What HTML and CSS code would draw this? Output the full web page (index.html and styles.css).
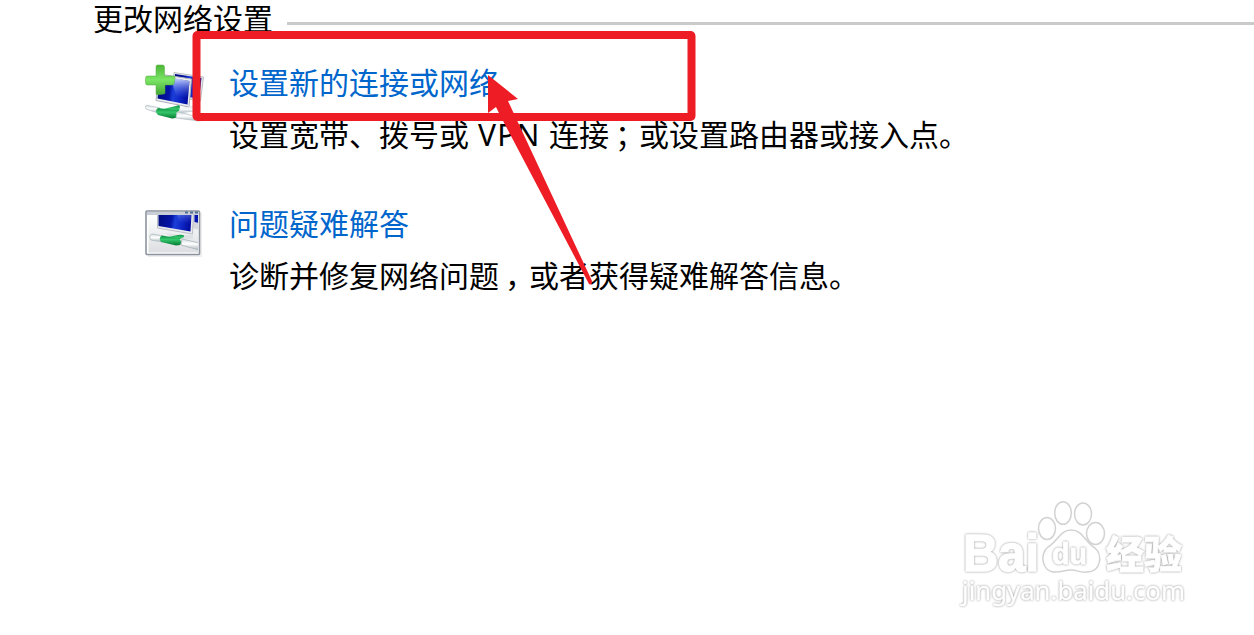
FILE: index.html
```html
<!DOCTYPE html>
<html lang="zh-CN">
<head>
<meta charset="utf-8">
<title>更改网络设置</title>
<link rel="stylesheet" href="styles.css">
</head>
<body>
<main class="page">
  <header class="heading"><h1>更改网络设置</h1><span class="rule"></span></header>
  <section class="option">
    <svg class="icon" width="62" height="62" viewBox="0 0 62 62" aria-hidden="true">
      <defs>
        <linearGradient id="screen" x1="0" y1=".45" x2="1" y2=".55"><stop offset="0" stop-color="#000c82"/><stop offset=".38" stop-color="#0415a8"/><stop offset=".5" stop-color="#1c3fd8"/><stop offset=".7" stop-color="#1028c8"/><stop offset="1" stop-color="#000a9a"/></linearGradient>
        <linearGradient id="shine" x1="0" y1="0" x2="0" y2="1"><stop offset="0" stop-color="#dfe7ff" stop-opacity=".95"/><stop offset="1" stop-color="#4a6ae8" stop-opacity="0"/></linearGradient>
        <linearGradient id="plus" x1="0" y1="0" x2="0" y2="1"><stop offset="0" stop-color="#4db538"/><stop offset=".5" stop-color="#7be566"/><stop offset="1" stop-color="#44a533"/></linearGradient>
        <linearGradient id="green" x1="0" y1="0" x2="0" y2="1"><stop offset="0" stop-color="#0b8e3f"/><stop offset=".4" stop-color="#35c76c"/><stop offset="1" stop-color="#047a32"/></linearGradient>
        <linearGradient id="cable" x1="0" y1="0" x2="0" y2="1"><stop offset="0" stop-color="#d5dde0"/><stop offset=".45" stop-color="#fff"/><stop offset="1" stop-color="#a9b6bc"/></linearGradient>
      </defs>
      <path d="M29 9.500 58.500 14 55.500 38 27 33z" fill="#e4e6e8" stroke="#b0b4b8" stroke-width=".8"/>
      <path d="M30 11 56.500 15 54 36 29 31z" fill="url(#screen)"/>
      <path d="M14 11 46.500 16 44 44 11 37.500z" fill="#ebedef" stroke="#aeb3ba" stroke-width="1"/>
      <path d="M15 13 44.500 18 42.500 41.500 12.500 35.500z" fill="url(#screen)"/>
      <path d="M26 14.500 44.500 18 43 35 31 33z" fill="url(#shine)"/>
      <path d="M30 46 48 43 57 45 54 48 36 50z" fill="url(#cable)"/>
      <path d="M18 46 31 43Q35 41 35 44L34 48 29 51z" fill="url(#green)"/>
      <path d="M3 42.500Q-1 42 1 46L13 50 15 45z" fill="url(#cable)" stroke="#b7c4c9" stroke-width=".8"/>
      <path d="M13 45 31 47.500Q34 51 31 55L27 55.500 13 52Q9 48 13 45z" fill="url(#green)"/>
      <path d="M32 49 42 51 59 57 54 58 31 55z" fill="url(#cable)" stroke="#b9c5ca" stroke-width=".8"/>
      <path d="M12.500 2h5q2 0 2 2v9h9q2 0 1.500 2l-1 5.500q-.5 1.500-2 1.500H20v7.500q0 1.500-1.500 1.500l-6 .8q-1.500 0-1.500-1.500V22H2.500q-2 0-2-2v-5q0-2 2-2H11V4q0-2 1.500-2z" fill="url(#plus)" stroke="#57ae40" stroke-width=".5"/>
    </svg>
    <div class="copy">
      <a class="link" href="#">设置新的连接或网络</a>
      <p class="desc">设置宽带、拨号或<span class="latin"> VPN </span>连接<span class="mark">；</span>或设置路由器或接入点。</p>
    </div>
  </section>
  <section class="option second">
    <svg class="icon" width="62" height="62" viewBox="0 0 62 62" aria-hidden="true">
      <defs>
        <clipPath id="inside"><path d="M3.500 11h49.500v37.500h-49.500z"/></clipPath>
        <linearGradient id="pane" x1="0" y1="0" x2="0" y2="1"><stop offset="0" stop-color="#fff"/><stop offset="1" stop-color="#dcdee1"/></linearGradient>
      </defs>
      <path d="M3 9h54v44H3z" fill="#eeeeef"/>
      <rect x="1" y="7" width="53.500" height="43.500" rx="1" fill="#fff" stroke="#8d949f" stroke-width="1.600"/>
      <path d="M2 8h51.500v3H2z" fill="#c9ced6"/>
      <path d="M40 7.500h3v2h-3zM45 7.500h3v2h-3zM50 7.500h3v2h-3z" fill="#536f92"/>
      <path d="M3.500 11h49.500v37.500h-49.500z" fill="url(#pane)"/>
      <g clip-path="url(#inside)">
        <path d="M48 10h7v16l-8-2z" fill="#d5d9dd"/><path d="M49.500 10h5v9l-5-1z" fill="#0515b2"/>
        <path d="M12.500 10h36l-1 20-35-6z" fill="#e9ebee" stroke="#aeb3ba" stroke-width=".8"/>
        <path d="M13.500 10h33l-1 17.500-32-5.500z" fill="url(#screen)"/>
        <path d="M31 7h15.500l-1 13-11-1z" fill="url(#shine)" opacity=".45"/>
        <path d="M20 29 36 31 48 31v4l-18 0z" fill="#dfe2e4"/>
        <path d="M23 33 33 31Q40 30 39 33L31 37z" fill="url(#green)"/>
        <path d="M7 30 18 32v6L6 36Q3 32 7 30z" fill="url(#cable)" stroke="#aebbc0" stroke-width=".8"/>
        <path d="M17 31.500 34 34.500Q38 38 35 41L31 41.500 16 38Q13 34 17 31.500z" fill="url(#green)"/>
        <path d="M37 35 54 39v7L36 41z" fill="url(#cable)" stroke="#a8b5bb" stroke-width=".8"/>
      </g>
    </svg>
    <div class="copy">
      <a class="link" href="#">问题疑难解答</a>
      <p class="desc">诊断并修复网络问题<span class="mark">，</span>或者获得疑难解答信息。</p>
    </div>
  </section>
  <svg class="callout" width="1254" height="635" viewBox="0 0 1254 635" aria-hidden="true">
    <rect x="196.500" y="35" width="495" height="82" rx="1" fill="none" stroke="#ee1c25" stroke-width="8" stroke-linejoin="round"/>
    <path d="M488 75 518 99 508 101 592 281Q592 286 589 284L501 117 496 107 488 113z" fill="#ee1c25"/>
  </svg>
  <svg class="watermark" width="254" height="145" viewBox="950 490 254 145">
    <text x="963" y="571" class="brand" textLength="76" lengthAdjust="spacingAndGlyphs">Bai</text>
    <g class="paw">
      <ellipse cx="1047" cy="528.500" rx="8.500" ry="11"/><ellipse cx="1063" cy="513" rx="8.300" ry="11.300"/><ellipse cx="1083" cy="514" rx="8.500" ry="11"/><ellipse cx="1095.500" cy="533.500" rx="9" ry="11"/>
      <path d="M1071 530C1060 530 1058 541 1048 547C1039 554 1042 572 1055 572C1063 572 1064 570 1071 570C1078 570 1079 573 1087 572C1101 572 1103 555 1095 548C1084 541 1083 530 1071 530z"/>
    </g>
    <text x="1052" y="564" class="du" textLength="35" lengthAdjust="spacingAndGlyphs">du</text>
    <text x="1106" y="568" class="cn" textLength="76" lengthAdjust="spacingAndGlyphs">经验</text>
    <text x="962" y="600" class="domain" textLength="223" lengthAdjust="spacingAndGlyphs">jingyan.baidu.com</text>
  </svg>
</main>
</body>
</html>
```
FILE: styles.css
```css
* { box-sizing: border-box; }
body { margin: 0; background: #fff; color: #000; font-family: "Noto Sans CJK SC", sans-serif; }
.page { position: relative; width: 1254px; height: 635px; overflow: hidden; }
.heading { display: flex; height: 40px; padding-left: 93px; gap: 14px; }
h1 { margin: 0; font-size: 30px; font-weight: 400; line-height: 35px; white-space: nowrap; }
.rule { flex: 1; height: 3px; margin-top: 22px; background: #cacaca; }
.option { display: flex; gap: 22px; padding: 23px 0 0 145px; height: 141px; }
.icon { flex: none; }
.copy { display: flex; flex-direction: column; gap: 12px; white-space: nowrap; font-size: 30px; font-weight: 400; line-height: 36px; }
.link { height: 40px; color: #0066cc; text-decoration: none; }
.desc { margin: 0; }
.latin { display: inline-block; width: 80px; white-space: pre; font-family: "Noto Sans", sans-serif; font-weight: 400; letter-spacing: 1.2px; line-height: 36px; }
.mark { display: inline-block; transform: translateX(6px); }
.callout { position: absolute; inset: 0; pointer-events: none; }
.watermark { position: absolute; right: 50px; bottom: 0; }
.watermark text { fill: #fff; stroke: #fff; stroke-width: .8; filter: drop-shadow(0 0 .9px #959595); }
.paw { fill: #fff; stroke: #d2d2d2; stroke-width: 1.5; }
.watermark .brand { font: 700 52px "Liberation Sans", sans-serif; stroke-width: 1.6; }
.watermark .du { font: 700 29px "Liberation Sans", sans-serif; }
.watermark .cn { font: 900 38px "Noto Sans CJK SC", sans-serif; }
.watermark .domain { font: 400 26px "Noto Sans", sans-serif; stroke-width: .3; }
```
